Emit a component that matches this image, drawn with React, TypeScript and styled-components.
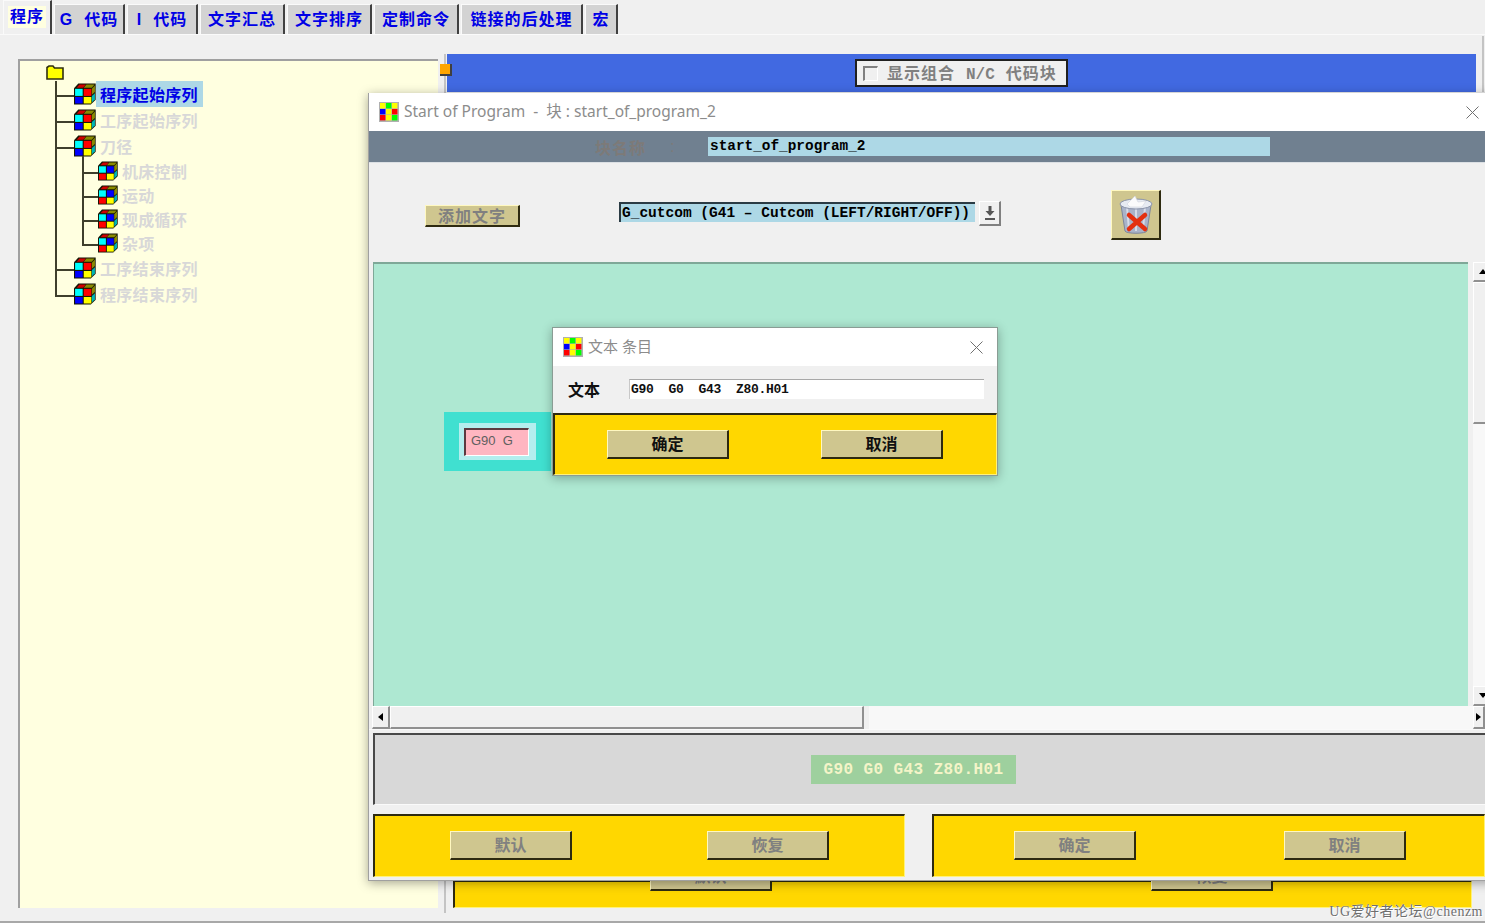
import React from "react";
import styled, { createGlobalStyle } from "styled-components";

const cjk = `"Liberation Sans", "Noto Sans CJK SC", sans-serif`;
const mono = `"Liberation Mono", "Noto Sans CJK SC", monospace`;

const GlobalStyle = createGlobalStyle`
  html, body { margin: 0; padding: 0; background: #f0f0f0; }
  * { box-sizing: border-box; }
`;

const Page = styled.div`
  position: relative;
  width: 1485px;
  height: 923px;
  overflow: hidden;
  background: #f0f0f0;
  font-family: ${cjk};
  border-bottom: 2px solid #a8a8a8;
`;

const TabBar = styled.div`
  display: flex;
  height: 35px;
  padding-left: 3px;
  gap: 2px;
  align-items: flex-end;
  border-bottom: 1px solid #fafafa;
`;

const Tab = styled.div<{ $w: number; $active?: boolean }>`
  width: ${(p) => p.$w}px;
  height: ${(p) => (p.$active ? 34 : 30)}px;
  display: flex;
  align-items: ${(p) => (p.$active ? "flex-start" : "center")};
  justify-content: center;
  padding-top: ${(p) => (p.$active ? 5 : 0)}px;
  background: ${(p) => (p.$active ? "#f0f0f0" : "#d3d3d3")};
  border-top: 1px solid #fafafa;
  border-left: 1px solid #fafafa;
  border-right: 2px solid #404040;
  color: #0000e6;
  font-size: 16px;
  font-weight: 700;
  letter-spacing: 1px;
  white-space: pre;
  span {
    background: ${(p) => (p.$active ? "#ffffe0" : "transparent")};
    padding: 0 ${(p) => (p.$active ? 2 : 0)}px;
    line-height: 22px;
  }
`;

const Body = styled.div`
  display: flex;
  height: 886px;
  padding: 19px 9px 0 18px;
`;

const TreePanel = styled.div`
  width: 420px;
  height: 849px;
  margin: 5px 2px 0 0;
  background: #ffffe0;
  border-top: 2px solid #a0a0a0;
  border-left: 2px solid #a0a0a0;
  padding: 4px 0 0 26px;
  flex: none;
`;

const Folder = styled.svg`
  display: block;
  width: 18px;
  height: 15px;
`;

const TreeBody = styled.div`
  margin-top: 1px;
  margin-left: 9px;
`;

const Row = styled.div<{ $h: number }>`
  display: flex;
  align-items: center;
  height: ${(p) => p.$h}px;
`;

const Elbow = styled.div<{ $last?: boolean; $w: number; $ext?: number }>`
  width: ${(p) => p.$w}px;
  align-self: stretch;
  display: flex;
  flex-direction: column;
  flex: none;
  &::before {
    content: "";
    flex: none;
    height: calc(50% + ${(p) => (p.$ext ?? 0) + 1}px);
    margin-top: -${(p) => p.$ext ?? 0}px;
    border-left: 2px solid #3f3f2c;
    border-bottom: 2px solid #3f3f2c;
  }
  &::after {
    content: "";
    flex: 1;
    border-left: ${(p) => (p.$last ? "none" : "2px solid #3f3f2c")};
  }
`;

const TreeLabel = styled.span<{ $small?: boolean; $selected?: boolean }>`
  display: inline-flex;
  align-items: center;
  height: 26px;
  padding: 0 5px 0 4px;
  background: ${(p) => (p.$selected ? "#add8e6" : "transparent")};
  color: ${(p) => (p.$selected ? "#0000e6" : "#d8d8d8")};
  font-size: 16px;
  font-weight: 700;
  letter-spacing: 0.3px;
`;

const SubTree = styled.div`
  padding-left: 25px;
  border-left: 2px solid #3f3f2c;
`;

const RightPanel = styled.div`
  position: relative;
  margin-left: 7px;
  width: 1029px;
  height: 854px;
  display: flex;
  flex-direction: column;
  justify-content: space-between;
  &::before {
    content: "";
    position: absolute;
    left: -3px;
    top: 0;
    width: 2px;
    height: 859px;
    background: #c4c4c4;
  }
  &::after {
    content: "";
    position: absolute;
    right: -8px;
    top: -18px;
    width: 2px;
    height: 56px;
    background: #c4c4c4;
  }
`;

const Handle = styled.div`
  position: absolute;
  z-index: 1;
  left: -7px;
  top: 10px;
  width: 12px;
  height: 12px;
  background: #ffa500;
  border-right: 2px solid #404040;
  border-bottom: 2px solid #404040;
`;

const BlueBar = styled.div`
  height: 38px;
  background: #4169e1;
  display: flex;
  align-items: center;
  justify-content: center;
`;

const CheckButton = styled.div`
  width: 213px;
  height: 28px;
  background: #f0f0f0;
  border: 2px solid #202020;
  display: flex;
  align-items: center;
  gap: 9px;
  padding-left: 6px;
  color: #808080;
  font-size: 16px;
  font-weight: 700;
  letter-spacing: 1px;
  white-space: pre;
`;

const CheckText = styled.span`
  display: flex;
  align-items: baseline;
  margin-top: -3px;
`;

const CheckMono = styled.span`
  margin: 0 11px;
  font-family: ${mono};
  letter-spacing: 0;
`;

const CheckBox = styled.span`
  width: 15px;
  height: 15px;
  background: #f0f0f0;
  border-top: 2px solid #808080;
  border-left: 2px solid #808080;
  border-right: 1px solid #fff;
  border-bottom: 1px solid #fff;
`;

const YellowPanel = styled.div<{ $w?: number; $h: number }>`
  width: ${(p) => (p.$w ? `${p.$w}px` : "100%")};
  height: ${(p) => p.$h}px;
  flex: none;
  background: #ffd700;
  border-top: 2px solid #2e2a10;
  border-left: 2px solid #2e2a10;
  border-right: 1px solid #fff27a;
  border-bottom: 1px solid #fff27a;
  display: flex;
  align-items: center;
`;

const BottomPanel = styled(YellowPanel)`
  margin-left: 6px;
  width: 1019px;
  padding: 0 0 0 195px;
  align-items: flex-start;
  gap: 379px;
  & > div {
    margin-top: -20px;
  }
`;

const Bevel = styled.div<{ $w?: number; $h?: number; $dim?: boolean }>`
  width: ${(p) => p.$w ?? 122}px;
  height: ${(p) => p.$h ?? 29}px;
  flex: none;
  background: #cfc68f;
  border-top: 1px solid #fff8c0;
  border-left: 1px solid #fff8c0;
  border-right: 2px solid #2e2a10;
  border-bottom: 2px solid #2e2a10;
  color: ${(p) => (p.$dim ? "#808080" : "#101010")};
  font-size: 16px;
  font-weight: 700;
  padding-bottom: 2px;
  display: flex;
  align-items: center;
  justify-content: center;
`;

const Window = styled.div`
  position: absolute;
  left: 368px;
  top: 93px;
  width: 1130px;
  height: 788px;
  background: #f0f0f0;
  border-left: 1px solid #a0a0a0;
  border-bottom: 1px solid #a0a0a0;
  box-shadow: 0 2px 10px rgba(0, 0, 0, 0.35);
  display: flex;
  flex-direction: column;
`;

const TitleBar = styled.div<{ $closeAt: number; $size?: number }>`
  position: relative;
  height: 38px;
  flex: none;
  background: #fff;
  display: flex;
  align-items: center;
  gap: 5px;
  padding: 0 0 0 10px;
  color: #8c8c8c;
  font-family: "Noto Sans", "Noto Sans CJK SC", sans-serif;
  font-size: ${(p) => p.$size ?? 15}px;
  white-space: pre;
  svg.close {
    position: absolute;
    left: ${(p) => p.$closeAt}px;
    top: 13px;
  }
`;

const TitleText = styled.span`
  margin-top: -3px;
`;

const SlateBar = styled.div`
  height: 32px;
  flex: none;
  background: #708090;
  border-bottom: 1px solid #dce0e4;
  display: flex;
  align-items: center;
  padding-left: 226px;
  color: #7d7a78;
  font-size: 16px;
  font-weight: 700;
  letter-spacing: 1px;
`;

const NameColon = styled.span`
  margin-left: 24px;
  width: 38px;
  font-weight: 400;
`;

const NameField = styled.div`
  width: 562px;
  height: 19px;
  background: #add8e6;
  padding-left: 2px;
  color: #000;
  font-family: ${mono};
  font-size: 14.4px;
  line-height: 19px;
  font-weight: 700;
  letter-spacing: 0;
`;

const Toolbar = styled.div`
  height: 99px;
  flex: none;
  display: flex;
  align-items: flex-start;
  padding-left: 56px;
`;

const AddButton = styled(Bevel)`
  margin-top: 42px;
  letter-spacing: 1px;
`;

const SelectField = styled.div`
  width: 356px;
  height: 20px;
  margin: 39px 0 0 99px;
  background: #add8e6;
  border-top: 2px solid #2a3b44;
  border-left: 2px solid #2a3b44;
  color: #000;
  font-family: ${mono};
  font-size: 14.5px;
  font-weight: 700;
  line-height: 18px;
  padding-left: 1px;
  white-space: pre;
`;

const ArrowButton = styled.div`
  width: 22px;
  height: 25px;
  margin: 38px 0 0 4px;
  border-top: 1px solid #fff;
  border-left: 1px solid #fff;
  border-right: 2px solid #808080;
  border-bottom: 2px solid #808080;
  display: flex;
  align-items: center;
  justify-content: center;
`;

const TrashButton = styled.div`
  width: 50px;
  height: 50px;
  margin: 27px 0 0 110px;
  background: #cfc68f;
  border-top: 1px solid #fff8c0;
  border-left: 1px solid #fff8c0;
  border-right: 2px solid #2e2a10;
  border-bottom: 2px solid #2e2a10;
  display: flex;
  align-items: center;
  justify-content: center;
`;

const CanvasRow = styled.div`
  display: flex;
  height: 444px;
  flex: none;
  padding-left: 4px;
`;

const Canvas = styled.div`
  position: relative;
  width: 1095px;
  background: #aee8d2;
  border-top: 2px solid #7fa898;
  border-left: 1px solid #7fa898;
`;

const VScroll = styled.div`
  margin-left: 5px;
  width: 12px;
  display: flex;
  flex-direction: column;
  background: #f8f8f8;
`;

const ScrollBtn = styled.div<{ $w?: number; $h?: number }>`
  width: ${(p) => p.$w ?? 20}px;
  height: ${(p) => p.$h ?? 20}px;
  flex: none;
  background: #f0f0f0;
  border-top: 1px solid #fff;
  border-left: 1px solid #fff;
  border-right: 2px solid #909090;
  border-bottom: 2px solid #909090;
  display: flex;
  align-items: center;
  justify-content: center;
`;

const VThumb = styled(ScrollBtn)`
  height: 142px;
`;

const VGap = styled.div`
  flex: 1;
`;

const HScroll = styled.div`
  display: flex;
  height: 24px;
  flex: none;
  padding-left: 3px;
  background: linear-gradient(to right, #f0f0f0 0 500px, #f8f8f8 500px);
  border-bottom: 1px solid #fafafa;
`;

const HEnd = styled(ScrollBtn)`
  margin-left: auto;
  margin-right: 13px;
  width: 12px;
`;

const Arrow = styled.span<{ $dir: "up" | "down" | "left" | "right" }>`
  width: 0;
  height: 0;
  border-style: solid;
  border-color: transparent;
  ${(p) =>
    p.$dir === "up"
      ? "border-width: 0 4px 5px; border-bottom-color: #000;"
      : p.$dir === "down"
        ? "border-width: 5px 4px 0; border-top-color: #000;"
        : p.$dir === "left"
          ? "border-width: 4px 5px 4px 0; border-right-color: #000;"
          : "border-width: 4px 0 4px 5px; border-left-color: #000;"}
`;

const Strip = styled.div`
  height: 72px;
  flex: none;
  margin: 3px 0 0 4px;
  background: #d8d8d8;
  border-top: 2px solid #484848;
  border-left: 2px solid #484848;
  border-bottom: 1px solid #fafafa;
  padding-left: 436px;
  display: flex;
  align-items: center;
`;

const CodeChip = styled.div`
  width: 205px;
  height: 29px;
  background: #9ed09e;
  color: #f4f4c8;
  font-family: ${mono};
  font-size: 16px;
  font-weight: 700;
  letter-spacing: 0.4px;
  display: flex;
  align-items: center;
  justify-content: center;
  white-space: pre;
`;

const ActionRow = styled.div`
  display: flex;
  gap: 27px;
  padding: 9px 0 0 4px;
`;

const LeftActions = styled(YellowPanel)`
  padding: 0 0 2px 75px;
  gap: 135px;
`;

const RightActions = styled(YellowPanel)`
  padding: 0 0 2px 80px;
  gap: 148px;
`;

const TextBlock = styled.div`
  position: absolute;
  left: 70px;
  top: 148px;
  width: 107px;
  height: 59px;
  background: #40e0d0;
  display: flex;
  align-items: center;
  justify-content: center;
`;

const TextBlockInner = styled.div`
  width: 77px;
  height: 37px;
  margin-left: -1px;
  background: #b4eeee;
  display: flex;
  align-items: center;
  justify-content: center;
`;

const TextBlockLabel = styled.div`
  width: 65px;
  height: 28px;
  margin-left: -1px;
  background: #ffb6c1;
  border-top: 2px solid #5c3a40;
  border-left: 2px solid #5c3a40;
  border-right: 1px solid #fff;
  border-bottom: 1px solid #fff;
  color: #5f5f5f;
  font-size: 13px;
  line-height: 22px;
  padding-left: 5px;
  white-space: pre;
`;

const EntryDialog = styled.div`
  position: absolute;
  left: 178px;
  top: 63px;
  width: 446px;
  height: 149px;
  background: #f0f0f0;
  border: 1px solid #8a9c94;
  box-shadow: 0 2px 10px rgba(0, 0, 0, 0.3);
  display: flex;
  flex-direction: column;
`;

const EntryRow = styled.div`
  height: 46px;
  flex: none;
  display: flex;
  align-items: center;
  padding-left: 15px;
  font-size: 16px;
  font-weight: 700;
  color: #101010;
`;

const EntryInput = styled.div`
  width: 355px;
  height: 20px;
  margin-left: 29px;
  background: #fff;
  border-top: 1px solid #a8a8a8;
  border-left: 1px solid #c8c8c8;
  padding-left: 1px;
  font-family: ${mono};
  font-size: 13px;
  font-weight: 700;
  letter-spacing: -0.3px;
  line-height: 19px;
  white-space: pre;
`;

const EntryActions = styled(YellowPanel)`
  padding-left: 52px;
  gap: 92px;
  margin-top: 1px;
`;

const Watermark = styled.div`
  position: absolute;
  right: 2px;
  bottom: 1px;
  color: #6e6e6e;
  font-size: 14px;
  letter-spacing: 0.5px;
  font-family: "Liberation Serif", "Noto Sans CJK SC", serif;
  text-shadow: 0 0 1px #fff, 1px 1px 0 #fff;
  white-space: pre;
`;

const Palette = () => (
  <svg width="20" height="20" viewBox="0 0 20 20">
    <rect width="20" height="20" fill="#b0b0b0" />
    {["#ff0", "#0f0", "#ff0", "#00f", "#ff0", "#f00", "#f00", "#ff0", "#0f0"].map((c, i) => (
      <rect key={i} x={1 + (i % 3) * 6} y={1 + Math.floor(i / 3) * 6} width="5.4" height="5.4" fill={c} />
    ))}
  </svg>
);

const CloseIcon = () => (
  <svg className="close" width="13" height="13" viewBox="0 0 13 13">
    <path d="M0.5 0.5 12.5 12.5M12.5 0.5 0.5 12.5" stroke="#707070" strokeWidth="1" fill="none" />
  </svg>
);

const Cube = ({ small }: { small?: boolean }) => {
  const s = small ? 20 : 22;
  const face = small ? ["#0ff", "#00f", "#f00", "#ff0"] : ["#0ff", "#f00", "#00f", "#ff0"];
  return (
    <svg width={s} height={s} viewBox="1 1.5 20.3 19.5" style={{ flex: "none" }}>
      <path d="M5 1.5h16v15l-4.5 4.500H1V6z" fill="#151505" />
      <path d="M6 2.500h6L9.500 5.500H3.500z" fill="#d00000" />
      <path d="M12.500 2.500h7.500L17.500 5.500H10z" fill="#8a8a00" />
      <path d="M17.500 6.500l2.800-3v6l-2.800 2.500z" fill="#8a8a00" />
      <path d="M17.500 13l2.800-2.500v5.500l-2.800 3z" fill="#00b5b5" />
      <rect x="2" y="6.500" width="7" height="6.500" fill={face[0]} />
      <rect x="10" y="6.500" width="7" height="6.500" fill={face[1]} />
      <rect x="2" y="14" width="7" height="6" fill={face[2]} />
      <rect x="10" y="14" width="7" height="6" fill={face[3]} />
    </svg>
  );
};

const Trash = () => (
  <svg width="36" height="42" viewBox="0 0 36 42">
    <path d="M3 11 7 37c1 3 21 3 22 0l4-26z" fill="#a9b3c9" stroke="#7d869c" />
    <path d="M9 13 11 36M18 14v23M27 13 25 36" stroke="#d5dbe8" strokeWidth="2" fill="none" />
    <ellipse cx="18" cy="10" rx="16" ry="5" fill="#e7ebf2" stroke="#8a93a8" />
    <path d="M9 10 17 2l3 6 8-1-4 6H12z" fill="#fbfbfb" stroke="#d0d4dc" strokeWidth="0.6" />
    <path d="M11 21 27 35M27 21 11 35" stroke="#e33010" strokeWidth="4.500" strokeLinecap="round" />
  </svg>
);

const DownIcon = () => (
  <svg width="12" height="16" viewBox="0 0 12 16">
    <path d="M4.500 1h3v5h3L6 11 1.500 6h3z" fill="#555" />
    <rect x="1" y="13" width="10" height="2" fill="#555" />
  </svg>
);

const tabs = [
  { w: 71, t: "G  代码" },
  { w: 71, t: "I  代码" },
  { w: 85, t: "文字汇总" },
  { w: 85, t: "文字排序" },
  { w: 85, t: "定制命令" },
  { w: 122, t: "链接的后处理" },
  { w: 33, t: "宏" },
];

const subItems = ["机床控制", "运动", "现成循环", "杂项"];

const App = () => {
  return (
    <Page>
      <GlobalStyle />
      <TabBar>
        <Tab $w={49} $active>
          <span>程序</span>
        </Tab>
        {tabs.map((tab) => (
          <Tab key={tab.t} $w={tab.w}>
            <span>{tab.t}</span>
          </Tab>
        ))}
      </TabBar>

      <Body>
        <TreePanel>
          <Folder viewBox="0 0 18 15">
            <path d="M1 4V2.500L3 1h4l1.500 2H17v11H1z" fill="#ffff00" stroke="#303010" strokeWidth="1.6" />
          </Folder>
          <TreeBody>
            <Row $h={26}>
              <Elbow $w={19} />
              <Cube />
              <TreeLabel $selected>程序起始序列</TreeLabel>
            </Row>
            <Row $h={26}>
              <Elbow $w={19} />
              <Cube />
              <TreeLabel>工序起始序列</TreeLabel>
            </Row>
            <Row $h={26}>
              <Elbow $w={19} />
              <Cube />
              <TreeLabel>刀径</TreeLabel>
            </Row>
            <SubTree>
              {subItems.map((item, i) => (
                <Row key={item} $h={24}>
                  <Elbow $w={16} $last={i === subItems.length - 1} $ext={i === 0 ? 3 : 0} />
                  <Cube small />
                  <TreeLabel $small>{item}</TreeLabel>
                </Row>
              ))}
            </SubTree>
            <Row $h={26}>
              <Elbow $w={19} />
              <Cube />
              <TreeLabel>工序结束序列</TreeLabel>
            </Row>
            <Row $h={26}>
              <Elbow $w={19} $last />
              <Cube />
              <TreeLabel>程序结束序列</TreeLabel>
            </Row>
          </TreeBody>
        </TreePanel>

        <RightPanel>
          <Handle />
          <BlueBar>
            <CheckButton>
              <CheckBox />
              <CheckText>
                显示组合
                <CheckMono>N/C</CheckMono>
                代码块
              </CheckText>
            </CheckButton>
          </BlueBar>
          <BottomPanel $h={28}>
            <Bevel $dim>默认</Bevel>
            <Bevel $dim>恢复</Bevel>
          </BottomPanel>
        </RightPanel>
      </Body>

      <Window>
        <TitleBar $closeAt={1097} $size={15.5}>
          <Palette />
          <TitleText>Start of Program  -  块 : start_of_program_2</TitleText>
          <CloseIcon />
        </TitleBar>
        <SlateBar>
          块名称
          <NameColon>:</NameColon>
          <NameField>start_of_program_2</NameField>
        </SlateBar>
        <Toolbar>
          <AddButton $w={95} $h={22} $dim>
            添加文字
          </AddButton>
          <SelectField>G_cutcom (G41 – Cutcom (LEFT/RIGHT/OFF))</SelectField>
          <ArrowButton>
            <DownIcon />
          </ArrowButton>
          <TrashButton>
            <Trash />
          </TrashButton>
        </Toolbar>
        <CanvasRow>
          <Canvas>
            <TextBlock>
              <TextBlockInner>
                <TextBlockLabel>G90  G</TextBlockLabel>
              </TextBlockInner>
            </TextBlock>
            <EntryDialog>
              <TitleBar $closeAt={417}>
                <Palette />
                <TitleText>文本 条目</TitleText>
                <CloseIcon />
              </TitleBar>
              <EntryRow>
                文本
                <EntryInput>G90  G0  G43  Z80.H01</EntryInput>
              </EntryRow>
              <EntryActions $h={62}>
                <Bevel>确定</Bevel>
                <Bevel>取消</Bevel>
              </EntryActions>
            </EntryDialog>
          </Canvas>
          <VScroll>
            <ScrollBtn $h={20}>
              <Arrow $dir="up" />
            </ScrollBtn>
            <VThumb />
            <VGap />
            <ScrollBtn $h={20}>
              <Arrow $dir="down" />
            </ScrollBtn>
          </VScroll>
        </CanvasRow>
        <HScroll>
          <ScrollBtn $w={18} $h={23}>
            <Arrow $dir="left" />
          </ScrollBtn>
          <ScrollBtn $w={474} $h={23} />
          <HEnd $h={23}>
            <Arrow $dir="right" />
          </HEnd>
        </HScroll>
        <Strip>
          <CodeChip>G90 G0 G43 Z80.H01</CodeChip>
        </Strip>
        <ActionRow>
          <LeftActions $w={532} $h={63}>
            <Bevel $dim>默认</Bevel>
            <Bevel $dim>恢复</Bevel>
          </LeftActions>
          <RightActions $w={553} $h={63}>
            <Bevel $dim>确定</Bevel>
            <Bevel $dim>取消</Bevel>
          </RightActions>
        </ActionRow>
      </Window>

      <Watermark>UG爱好者论坛@chenzm</Watermark>
    </Page>
  );
};

export default App;
